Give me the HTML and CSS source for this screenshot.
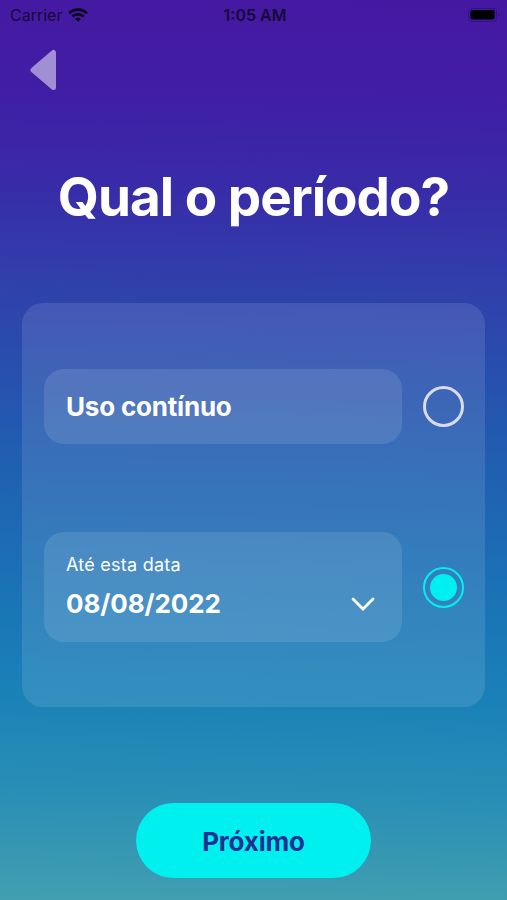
FILE: index.html
```
<!DOCTYPE html>
<html lang="pt-BR">
<head>
  <meta charset="UTF-8">
  <meta name="viewport" content="width=device-width, initial-scale=1.0">
  <title>Qual o período?</title>
  <link rel="stylesheet" href="styles.css">
</head>
<body>

  <div class="status-bar">
    <div class="carrier">
      <span>Carrier</span>
      <svg class="wifi" viewBox="0 0 20 14" width="20" height="14">
        <path d="M1.2 5.2a12.6 12.6 0 0 1 17.6 0" fill="none" stroke="#08041a" stroke-width="2.7"/>
        <path d="M4.4 8.6a8 8 0 0 1 11.2 0" fill="none" stroke="#08041a" stroke-width="2.5"/>
        <path d="M10 13.8l-2.8-2.9a4 4 0 0 1 5.6 0z" fill="#08041a"/>
      </svg>
    </div>
    <div class="time">1:05 AM</div>
    <svg class="battery" viewBox="0 0 32 14" width="32" height="14">
      <rect x="0.5" y="0.5" width="28" height="13" rx="3.5" fill="none" stroke="#32118a"/>
      <rect x="2.4" y="2" width="24.2" height="9.6" rx="2" fill="#000"/>
      <path d="M30 5v4q1.5-.5 1.5-2T30 5z" fill="#32118a"/>
    </svg>
  </div>

  <a class="back" href="#" aria-label="Voltar">
    <svg viewBox="0 0 28 42" width="28" height="42">
      <path d="M3 21L23.5 3.5V38.5z" fill="#a08fd2" stroke="#a08fd2" stroke-width="5" stroke-linejoin="round"/>
    </svg>
  </a>

  <h1>Qual o período?</h1>

  <div class="card">
    <div class="option">
      <div class="field">
        <span class="value">Uso contínuo</span>
      </div>
      <span class="radio"></span>
    </div>

    <div class="option">
      <div class="field field-date">
        <span class="label">Até esta data</span>
        <div class="date-row">
          <span class="value value-date">08/08/2022</span>
          <svg viewBox="0 0 24 14" width="24" height="14">
            <path d="M2 2l10 10L22 2" fill="none" stroke="#fff" stroke-width="2.8" stroke-linecap="round"/>
          </svg>
        </div>
      </div>
      <span class="radio checked"></span>
    </div>
  </div>

  <button class="next">Próximo</button>

</body>
</html>
```

FILE: styles.css
```
* {
  box-sizing: border-box;
}

body {
  font-family: Inter, 'Liberation Sans', sans-serif;
  background: linear-gradient(181deg, #4618a2 0%, #401ea5 11%, #382ba8 21%, #3040ab 32%, #225ab0 48%, #1a72b5 65%, #1a81b8 77%, #2b90b5 89%, #429fb0 100%);
  color: #ffffff;
  margin: 0;
  height: 900px;
  overflow: hidden;
  display: flex;
  flex-direction: column;
  align-items: center;
}

.status-bar {
  width: 100%;
  height: 30px;
  padding: 0 7px 0 10px;
  display: grid;
  grid-template-columns: 1fr auto 1fr;
  align-items: center;
  color: #160836;
  font-size: 16px;
}

.carrier {
  display: flex;
  align-items: center;
  gap: 6px;
}

.time {
  font-weight: 600;
}

.battery {
  justify-self: end;
}

.back {
  align-self: flex-start;
  height: 42px;
  margin: 19px 0 0 30px;
}

h1 {
  font-size: 53px;
  font-weight: 700;
  line-height: 64px;
  letter-spacing: -1px;
  margin: 74px 0 0;
  white-space: nowrap;
}

.card {
  width: 463px;
  height: 404px;
  margin-top: 74px;
  padding: 66px 21px 0 22px;
  border-radius: 21px;
  background: rgba(255, 255, 255, 0.11);
}

.option {
  display: flex;
  align-items: center;
  justify-content: space-between;
  margin-bottom: 88px;
}

.field {
  width: 358px;
  height: 75px;
  padding: 0 22px;
  border-radius: 20px;
  background: rgba(255, 255, 255, 0.11);
  display: flex;
  flex-direction: column;
  justify-content: center;
}

.field-date {
  height: 110px;
}

.label {
  font-size: 18px;
  line-height: 24px;
  letter-spacing: 0.25px;
  margin: -2px 0 11px;
}

.date-row {
  display: flex;
  align-items: center;
  justify-content: space-between;
  padding-right: 5px;
}

.value {
  font-size: 26px;
  font-weight: 700;
  line-height: 32px;
  letter-spacing: -0.2px;
}

.value-date {
  letter-spacing: -0.1px;
}

.radio {
  width: 41px;
  height: 41px;
  border: 3px solid #dadbe8;
  border-radius: 50%;
}

.radio.checked {
  border: 2.5px solid #00f0f0;
  padding: 5px;
}

.radio.checked::before {
  content: '';
  display: block;
  height: 100%;
  border-radius: 50%;
  background: #00f0f0;
}

.next {
  width: 235px;
  height: 75px;
  margin-top: 96px;
  padding-top: 2px;
  border: none;
  border-radius: 38px;
  background: #00f0f0;
  color: #1f3093;
  font-family: inherit;
  font-size: 26px;
  font-weight: 700;
  letter-spacing: -0.2px;
  cursor: pointer;
}
```
